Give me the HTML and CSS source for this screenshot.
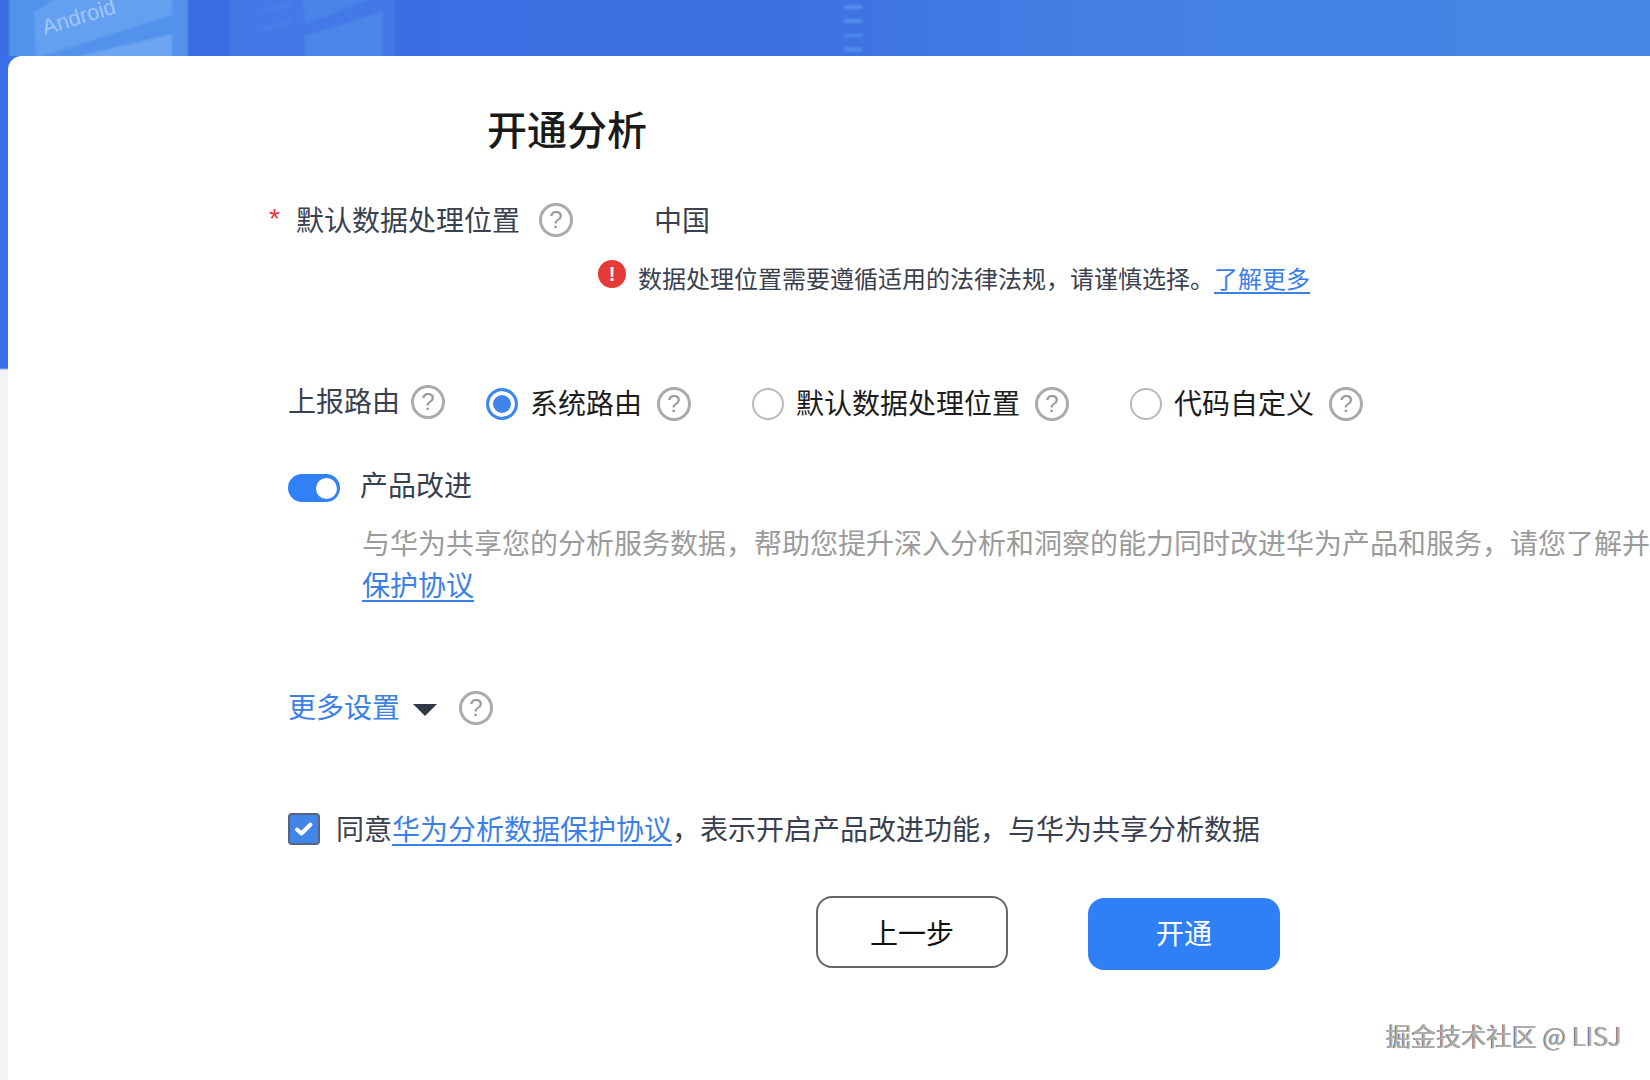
FILE: index.html
```html
<!DOCTYPE html>
<html lang="zh-CN">
<head>
<meta charset="utf-8">
<title>开通分析</title>
<link rel="stylesheet" href="styles.css">
</head>
<body>
<header class="hero">
  <svg class="hero-art" width="1000" height="56" viewBox="0 0 1000 56" aria-hidden="true">
    <defs><filter id="soft"><feGaussianBlur stdDeviation="1.2"/></filter></defs>
    <g filter="url(#soft)">
      <rect x="9" y="-4" width="179" height="64" fill="#5392ec"/>
      <polygon points="34,12 60,-4 172,-4 172,15 36,58" fill="#64a0ef"/>
      <polygon points="72,58 172,34 172,60" fill="#6da5f0"/>
      <rect x="230" y="-4" width="165" height="64" fill="#4279e6"/>
      <polygon points="303,-4 378,-4 305,24" fill="#4a84e9"/>
      <polygon points="305,36 382,12 382,60 305,60" fill="#4d86e9"/>
      <rect x="262" y="6" width="30" height="3" fill="#4a80e8" transform="rotate(-14 277 8)"/>
      <rect x="262" y="24" width="30" height="3" fill="#4a80e8" transform="rotate(-14 277 26)"/>
      <rect x="844" y="5" width="18" height="4" fill="#5490ec"/>
      <rect x="844" y="19" width="18" height="4" fill="#5490ec"/>
      <rect x="844" y="34" width="18" height="3" fill="#4f8beb"/>
      <rect x="844" y="47" width="18" height="5" fill="#4f8beb"/>
    </g>
  </svg>
  <span class="hero-word">Android</span>
</header>
<div class="shell">
  <main class="card">
    <h1 class="title">开通分析</h1>
    <div class="form">
      <div class="row location">
        <span class="star">*</span>
        <span class="label">默认数据处理位置</span>
        <span class="help">?</span>
        <span class="value">中国</span>
      </div>
      <div class="row notice">
        <span class="notice-icon">!</span>
        <span class="notice-text">数据处理位置需要遵循适用的法律法规，请谨慎选择。<a class="link" href="#">了解更多</a></span>
      </div>
      <div class="row route">
        <span class="label route-label">上报路由</span>
        <span class="help route-help">?</span>
        <div class="options">
          <label class="option"><span class="radio radio-on"></span><span class="option-text">系统路由</span><span class="help">?</span></label>
          <label class="option"><span class="radio"></span><span class="option-text">默认数据处理位置</span><span class="help">?</span></label>
          <label class="option"><span class="radio"></span><span class="option-text">代码自定义</span><span class="help">?</span></label>
        </div>
      </div>
      <div class="row improve">
        <span class="toggle"><span class="knob"></span></span>
        <span class="label">产品改进</span>
      </div>
      <p class="desc">与华为共享您的分析服务数据，帮助您提升深入分析和洞察的能力同时改进华为产品和服务，请您了解并<a class="link" href="#">保护协议</a></p>
      <div class="row more">
        <a class="more-link" href="#">更多设置</a>
        <span class="caret"></span>
        <span class="help">?</span>
      </div>
      <div class="row agree">
        <span class="checkbox">
          <svg width="20" height="16" viewBox="0 0 20 16" aria-hidden="true"><path d="M3 8.5 7.5 12.5 16.5 3.5" fill="none" stroke="#fff" stroke-width="4" stroke-linecap="round" stroke-linejoin="round"/></svg>
        </span>
        <span class="label">同意<a class="link" href="#">华为分析数据保护协议</a>，表示开启产品改进功能，与华为共享分析数据</span>
      </div>
      <div class="actions">
        <button class="btn btn-prev" type="button">上一步</button>
        <button class="btn btn-open" type="button">开通</button>
      </div>
    </div>
  </main>
</div>
<div class="watermark">掘金技术社区 @ LISJ</div>
</body>
</html>
```
FILE: styles.css
```css
* { box-sizing: border-box; }
html, body { margin: 0; height: 1080px; overflow: hidden; }
body {
  position: relative;
  background: #fff;
  color: #39414f;
  font-family: "Noto Sans CJK SC", "Liberation Sans", sans-serif;
  font-size: 28px;
}
.hero {
  position: relative;
  height: 56px;
  overflow: hidden;
  background: linear-gradient(90deg, #386be2 0%, #3b6fe1 45%, #4481e3 70%, #4687e4 100%);
}
.hero-art { position: absolute; left: 0; top: 0; }
.hero-word {
  position: absolute;
  left: 46px;
  top: 17px;
  color: #a3c8f6;
  font: 22px/22px "Liberation Sans", sans-serif;
  transform: rotate(-17deg);
  transform-origin: left bottom;
  filter: blur(0.6px);
}
.shell {
  height: 1024px;
  padding-left: 8px;
  background: linear-gradient(180deg, #3a70ec 312px, #f2f3f6 314px);
}
.card {
  height: 100%;
  padding-top: 44px;
  background: #fff;
  border-radius: 14px 0 0 0;
}
.title {
  margin: 0 0 0 479px;
  color: #1a1a1a;
  font-size: 40px;
  font-weight: 500;
  line-height: 56px;
}
.form { padding-left: 280px; }
.row { display: flex; align-items: center; height: 40px; }
.label { margin-bottom: 2px; white-space: nowrap; line-height: 40px; }
.help {
  display: inline-flex;
  flex: none;
  align-items: center;
  justify-content: center;
  width: 34px;
  height: 34px;
  border: 3px solid #ababab;
  border-radius: 50%;
  color: #999;
  font: 24px/1 "Liberation Sans", sans-serif;
}
.location { margin: 44px 0 0 -19px; }
.star { width: 27px; color: #e53935; font: 28px/1 "Liberation Sans", sans-serif; margin-top: -2px; }
.location .help { margin-left: 19px; }
.value { margin: 0 0 2px 81px; }
.notice { height: 34px; margin: 20px 0 0 310px; }
.notice-icon {
  display: flex;
  flex: none;
  align-items: center;
  justify-content: center;
  width: 28px;
  height: 28px;
  margin-top: -6px;
  border-radius: 50%;
  background: #e53935;
  color: #fff;
  font: bold 20px/1 "Liberation Sans", sans-serif;
}
.notice-text { margin: 2px 0 0 12px; font-size: 24px; line-height: 34px; white-space: nowrap; }
.link { color: #3a80e6; text-decoration: underline; text-underline-offset: 4px; }
.route { margin-top: 88px; }
.route-label { margin-bottom: 4px; }
.route-help { margin-left: 11px; }
.options { display: flex; gap: 61px; margin: 4px 0 0 41px; }
.option { display: flex; align-items: center; }
.option-text { margin: 0 15px 4px 12px; color: #1c1c1c; line-height: 40px; white-space: nowrap; }
.radio { flex: none; width: 32px; height: 32px; border: 2px solid #b9b9b9; border-radius: 50%; background: #fff; }
.radio-on { border: 3px solid #3f87ec; background: #4285ea; box-shadow: inset 0 0 0 4px #fff; }
.improve { margin-top: 43px; }
.toggle {
  display: flex;
  flex: none;
  align-items: center;
  justify-content: flex-end;
  width: 52px;
  height: 28px;
  margin-top: 6px;
  padding-right: 3px;
  border-radius: 14px;
  background: #3280f6;
}
.knob { width: 21px; height: 21px; border-radius: 50%; background: #fff; }
.improve .label { margin-left: 20px; }
.desc {
  width: 1288px;
  margin: 16px 0 0 74px;
  color: #9b9b9b;
  line-height: 42px;
}
.more { margin-top: 83px; }
.more-link { margin-bottom: 4px; color: #3a80e6; text-decoration: none; line-height: 40px; white-space: nowrap; }
.caret {
  width: 0;
  height: 0;
  margin: 4px 0 0 13px;
  border-top: 12px solid #2f3846;
  border-left: 12px solid transparent;
  border-right: 12px solid transparent;
}
.more .help { margin: 0 0 0 22px; }
.agree { margin-top: 81px; }
.checkbox {
  display: flex;
  flex: none;
  align-items: center;
  justify-content: center;
  width: 32px;
  height: 32px;
  margin-right: 16px;
  border: 2px solid #566480;
  border-radius: 4px;
  background: #4285e8;
}
.actions { display: flex; gap: 80px; align-items: flex-start; margin: 47px 0 0 528px; }
.btn {
  width: 192px;
  height: 72px;
  border-radius: 16px;
  font-family: inherit;
  font-size: 28px;
  padding: 0;
}
.btn-prev { border: 2px solid #666; background: #fff; color: #111; }
.btn-open { margin-top: 2px; padding-bottom: 4px; border: 0; background: #2f80f7; color: #fff; }
.watermark {
  position: absolute;
  right: 28px;
  top: 1017px;
  color: #b0b0b0;
  font-size: 25px;
  letter-spacing: 0.15px;
  line-height: 36px;
  white-space: nowrap;
  text-shadow: -1px 0 0 #6e6e6e;
}
```
